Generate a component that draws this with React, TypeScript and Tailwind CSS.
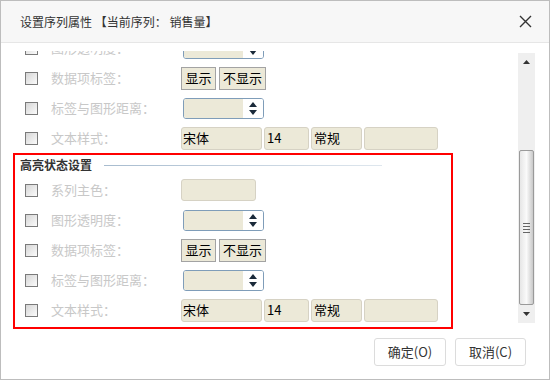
import React from "react";

const Checkbox = () => (
  <span className="w-[13px] h-[13px] shrink-0 border border-[#7a7a7a] bg-linear-to-br from-[#d6d6d6] to-[#fbfbfb]" />
);

const Label = ({ text }: { text: string }) => (
  <span className="ml-[13px] w-[130px] shrink-0 text-[#c8c8c8] whitespace-nowrap">{text}</span>
);

const Spinner = () => (
  <div className="ml-[2px] w-[81px] h-[21px] flex border border-[#7f9db9] rounded-[3px] overflow-hidden">
    <div className="flex-1 bg-[#ece9d8]" />
    <div className="w-[20px] bg-white flex flex-col items-center justify-center gap-[3px]">
      <svg width="8" height="5" viewBox="0 0 8 5">
        <path d="M4 0 L8 5 L0 5 Z" fill="#1a2a3a" />
      </svg>
      <svg width="8" height="5" viewBox="0 0 8 5">
        <path d="M0 0 L8 0 L4 5 Z" fill="#1a2a3a" />
      </svg>
    </div>
  </div>
);

const ShowButtons = () => (
  <div className="flex gap-[3px]">
    <span className="w-[35px] h-[23px] flex items-center justify-center border border-[#a3a3a3] bg-[#ece9d8] text-black">显示</span>
    <span className="w-[47px] h-[23px] flex items-center justify-center border border-[#a3a3a3] bg-[#ece9d8] text-black">不显示</span>
  </div>
);

const TextStyle = () => (
  <div className="flex gap-[2px]">
    <span className="w-[81px] h-[23px] pl-[1px] flex items-center border border-[#d6d2c4] rounded-[3px] bg-[#ece9d8] text-black">宋体</span>
    <span className="w-[45px] h-[23px] pl-[2px] flex items-center border border-[#d6d2c4] rounded-[3px] bg-[#ece9d8] text-black">14</span>
    <span className="w-[51px] h-[23px] pl-[2px] flex items-center border border-[#d6d2c4] rounded-[3px] bg-[#ece9d8] text-black">常规</span>
    <span className="w-[74px] h-[23px] border border-[#d6d2c4] rounded-[3px] bg-[#ece9d8]" />
  </div>
);

const Row = ({ label, children }: { label: string; children?: React.ReactNode }) => (
  <div className="h-[30px] flex items-center">
    <Checkbox />
    <Label text={label} />
    {children}
  </div>
);

export default function App() {
  return (
    <div className="w-[550px] h-[380px] flex flex-col border border-[#bdbdbd] bg-white text-[13px] font-['Noto_Sans_CJK_SC','Microsoft_YaHei',sans-serif]">
      <div className="h-[42px] shrink-0 flex items-center justify-between pl-[19px] pr-[17px] bg-[#f7f7f7] border-b border-[#e6e6e6]">
        <span className="text-[12px] text-[#333] whitespace-pre">设置序列属性 【当前序列： 销售量】</span>
        <svg width="13" height="13" viewBox="0 0 13 13">
          <path d="M1 1 L12 12 M12 1 L1 12" stroke="#333" strokeWidth="1.4" />
        </svg>
      </div>

      <div className="h-[287px] shrink-0 flex">
        <div className="flex-1 pt-[8px] flex flex-col">
          <div className="flex-1 overflow-hidden">
            <div className="-mt-[18px] pl-[24px]">
              <Row label="图形透明度：">
                <Spinner />
              </Row>
              <Row label="数据项标签：">
                <ShowButtons />
              </Row>
              <Row label="标签与图形距离：">
                <Spinner />
              </Row>
              <Row label="文本样式：">
                <TextStyle />
              </Row>
            </div>
            <div className="ml-[12px] w-[440px] border-2 border-[#ff0000] pl-[10px] pb-[2px]">
              <div className="h-[20px] -ml-[5px] flex items-center">
                <span className="text-[12px] font-bold text-[#333]">高亮状态设置</span>
                <span className="ml-[12px] w-[278px] h-px bg-linear-to-r from-[#a8bccf] to-[#dfe7ee]" />
              </div>
              <Row label="系列主色：">
                <span className="w-[75px] h-[22px] border border-[#d6d2c4] rounded-[3px] bg-[#ece9d8]" />
              </Row>
              <Row label="图形透明度：">
                <Spinner />
              </Row>
              <Row label="数据项标签：">
                <ShowButtons />
              </Row>
              <Row label="标签与图形距离：">
                <Spinner />
              </Row>
              <Row label="文本样式：">
                <TextStyle />
              </Row>
            </div>
          </div>
        </div>

        <div className="mt-[10px] mr-[14px] w-[17px] h-[270px] flex flex-col bg-[#efefef]">
          <div className="h-[17px] flex items-center justify-center">
            <svg width="7" height="4" viewBox="0 0 7 4">
              <path d="M3.5 0 L7 4 L0 4 Z" fill="#333" />
            </svg>
          </div>
          <div className="flex-1">
            <div className="mt-[80px] ml-[1px] w-[15px] h-[155px] flex flex-col items-center justify-center gap-[2px] border border-[#9a9a9a] rounded-[2px] bg-linear-to-r from-[#e6e6e6] via-[#fafafa] to-[#c9c9c9]">
              <span className="w-[7px] h-px bg-[#666]" />
              <span className="w-[7px] h-px bg-[#666]" />
              <span className="w-[7px] h-px bg-[#666]" />
              <span className="w-[7px] h-px bg-[#666]" />
            </div>
          </div>
          <div className="h-[18px] flex items-center justify-center">
            <svg width="7" height="4" viewBox="0 0 7 4">
              <path d="M0 0 L7 0 L3.5 4 Z" fill="#333" />
            </svg>
          </div>
        </div>
      </div>

      <div className="flex-1 flex justify-end items-start gap-[9px] pt-[8px] pr-[23px]">
        <span className="w-[72px] h-[28px] flex items-center justify-center border border-[#dcdcdc] rounded-[3px] bg-white text-[#333]">确定(O)</span>
        <span className="w-[71px] h-[28px] flex items-center justify-center border border-[#dcdcdc] rounded-[3px] bg-white text-[#333]">取消(C)</span>
      </div>
    </div>
  );
}
